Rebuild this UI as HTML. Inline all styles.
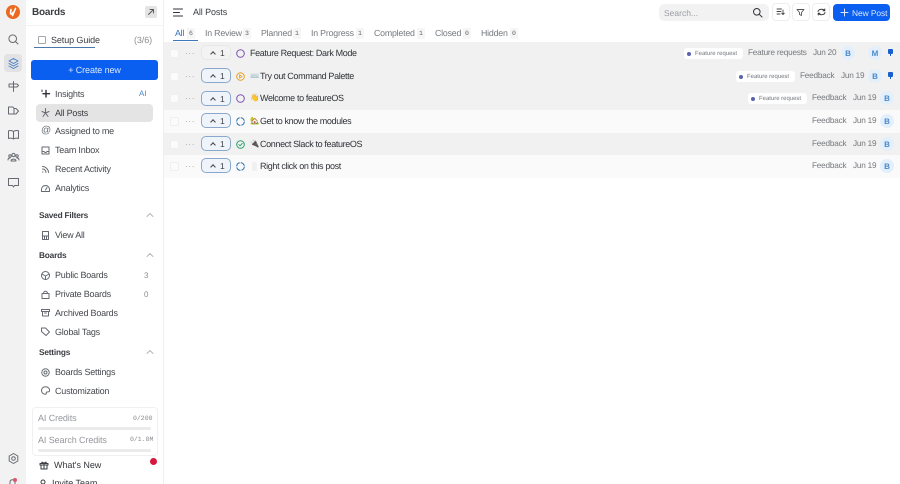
<!DOCTYPE html>
<html><head><meta charset="utf-8"><style>
html,body{margin:0;padding:0;width:900px;height:484px;overflow:hidden;background:#fff}
body{font-family:"Liberation Sans","Noto Sans CJK SC",sans-serif;position:relative;color:#3c3f45;text-rendering:geometricPrecision;-webkit-font-smoothing:antialiased}
.a{position:absolute;white-space:nowrap}
svg{position:absolute;fill:none;stroke:#666a70;stroke-width:1;stroke-linecap:round;stroke-linejoin:round}
.n{position:absolute;left:55px;font-size:9px;line-height:12px;letter-spacing:-.22px;color:#45484e;white-space:nowrap}
.h{position:absolute;left:39px;font-size:8.3px;line-height:12px;font-weight:bold;color:#3a3d42;letter-spacing:-.2px}
.tab{position:absolute;top:27px;font-size:8.8px;line-height:12px;letter-spacing:-.2px;color:#75797f;white-space:nowrap}
.cn{position:absolute;top:27.5px;font-family:"Liberation Mono",monospace;font-size:6.5px;line-height:11px;width:8px;text-align:center;background:#f6f6f6;color:#666}
.row{position:absolute;left:164px;width:736px;height:22px}
.chk{position:absolute;left:6px;top:7px;width:7px;height:7px;background:#fbfbfb;border:1px solid #efefef;border-radius:2px}
.dots{position:absolute;left:21px;top:4px;font-size:9px;line-height:14px;color:#a5a8ac;letter-spacing:.3px}
.vote{position:absolute;left:37px;top:3px;width:28px;height:13px;border:1px solid #8aa8cc;border-radius:5px;background:#eff4fa;color:#333}
.vote span{position:absolute;left:18px;top:.5px;font-size:8.5px;line-height:13px;color:#3a3d42}
.vote i{position:absolute;left:9px;top:5.5px;width:3px;height:3px;border-left:1px solid #444;border-top:1px solid #444;transform:rotate(45deg)}
.t{position:absolute;left:86px;top:5px;font-size:9px;line-height:12px;letter-spacing:-.36px;color:#2f3237;white-space:nowrap}
.e{position:absolute;top:5px;font-size:7.5px;line-height:12px;white-space:nowrap}
.tag{position:absolute;top:6px;height:11px;width:45px;background:#fff;border-radius:3px;font-size:6px;line-height:12px;color:#74777d;padding:0 3px 0 11px;letter-spacing:-.02px;white-space:nowrap}
.tag:before{content:"";position:absolute;left:3px;top:3.5px;width:4px;height:4px;border-radius:50%;background:#5a62ac}
.m{position:absolute;top:5px;font-size:8.2px;line-height:12px;color:#75787d;letter-spacing:-.2px;white-space:nowrap}
.av{position:absolute;top:4px;width:14px;height:14px;border-radius:50%;background:#e3effb;color:#4a88c9;font-size:8px;font-weight:bold;line-height:15px;text-align:center}
.pin{position:absolute;left:724px;top:7px;width:5px;height:5px;background:#1a5fd0;border-radius:1px}
.pin:after{content:"";position:absolute;left:2px;top:5px;width:1px;height:2px;background:#1a5fd0}
.btn{position:absolute;top:3px;width:16px;height:16px;border:1px solid #eeeeee;border-radius:4px;background:#fff}
</style></head><body>

<!-- icon rail -->
<div class="a" style="left:0;top:0;width:26px;height:484px;background:#f2f2f2"></div>
<div class="a" style="left:6px;top:5px;width:14px;height:14px;border-radius:50%;background:#ec6a1f"></div>
<svg style="left:6px;top:5px;stroke:#fff;stroke-width:1.6" width="14" height="14" viewBox="0 0 14 14"><path d="M5 4.5L4.5 8.5C5.5 9.5 6.5 9 7 7.5M9.5 3.5L6.5 10.5"/></svg>
<div class="a" style="left:4px;top:54px;width:18px;height:18px;border-radius:4px;background:#e2e2e4"></div>
<svg style="left:7px;top:33px" width="13" height="13" viewBox="0 0 13 13"><circle cx="5.7" cy="5.7" r="3.8"/><path d="M8.6 8.6L11 11"/></svg>
<svg style="left:7px;top:57px;stroke:#4c80c4" width="13" height="13" viewBox="0 0 13 13"><path d="M6.5 1.5L11 4 6.5 6.5 2 4z"/><path d="M2 6.5L6.5 9 11 6.5"/><path d="M2 9L6.5 11.5 11 9"/></svg>
<svg style="left:7px;top:80px" width="13" height="13" viewBox="0 0 13 13"><path d="M6.5 1.5V11.5M2 4H10L11.5 5.5 10 7H2z"/></svg>
<svg style="left:7px;top:104px" width="13" height="13" viewBox="0 0 13 13"><path d="M1.5 3H6L7 4.5V10H1.5zM7 4.5H9L11.5 7 9 10H7"/></svg>
<svg style="left:7px;top:128px" width="13" height="13" viewBox="0 0 13 13"><path d="M6.5 3.5C5 2.3 3 2.3 1.5 2.8V10.5C3 10 5 10 6.5 11 8 10 10 10 11.5 10.5V2.8C10 2.3 8 2.3 6.5 3.5zM6.5 3.5V11"/></svg>
<svg style="left:7px;top:151px" width="13" height="13" viewBox="0 0 13 13"><circle cx="6.5" cy="4" r="1.6"/><circle cx="3" cy="5" r="1.2"/><circle cx="10" cy="5" r="1.2"/><path d="M4 10C4 7.5 9 7.5 9 10zM1 9C1 7.5 2 7 3 7M12 9C12 7.5 11 7 10 7"/></svg>
<svg style="left:7px;top:176px" width="13" height="13" viewBox="0 0 13 13"><path d="M1.5 2.5H11.5V9.5H7.5L6.5 11 5.5 9.5H1.5z"/></svg>
<svg style="left:7px;top:452px" width="13" height="13" viewBox="0 0 13 13"><circle cx="6.5" cy="6.5" r="1.8"/><path d="M6.5 1.5L10.8 4V9L6.5 11.5 2.2 9V4z"/></svg>
<svg style="left:8px;top:477px" width="12" height="10" viewBox="0 0 12 10"><path d="M2 10V5C2 2 7 2 7 5V10"/></svg>
<div class="a" style="left:13px;top:478px;width:4px;height:4px;border-radius:50%;background:#e0556b"></div>

<!-- sidebar -->
<div class="a" style="left:32px;top:6px;font-size:10px;line-height:14px;font-weight:bold;color:#3a3d42;letter-spacing:-.2px">Boards</div>
<div class="a" style="left:145px;top:6px;width:12px;height:12px;border-radius:2px;background:#e4e4e5"></div>
<svg style="left:147px;top:8px;stroke:#555;stroke-width:.9" width="8" height="8" viewBox="0 0 8 8"><path d="M1.5 6.5L6.5 1.5M3 1.5H6.5V5"/></svg>
<div class="a" style="left:26px;top:25px;width:138px;height:1px;background:#f3f3f3"></div>
<div class="a" style="left:38px;top:36px;width:6px;height:6px;border:1px solid #a5a8ac;border-radius:1px"></div>
<div class="a" style="left:51px;top:34px;font-size:9px;line-height:12px;color:#3a3d42;letter-spacing:-.1px">Setup Guide</div>
<div class="a" style="left:34px;top:47px;width:61px;height:1px;background:#4a78ad"></div>
<div class="a" style="left:134px;top:34px;font-size:9px;line-height:12px;color:#8a8d92;letter-spacing:-.1px">(3/6)</div>

<div class="a" style="left:31px;top:60px;width:127px;height:20px;background:#0b5ff0;border-radius:3px;color:#dbe8ff;font-size:9px;line-height:20px;text-align:center;letter-spacing:-.1px">+ Create new</div>

<div class="a" style="left:36px;top:104px;width:117px;height:18px;background:#e4e4e4;border-radius:4px"></div>

<svg style="left:40px;top:88px;stroke:#2f3237" width="11" height="11" viewBox="0 0 11 11"><path d="M6 2.5V9M3 5.7H9.5" stroke-width="1.4"/><path d="M2 2V3.5"/></svg>
<div class="n" style="top:88px">Insights</div>
<div class="a" style="left:139px;top:88px;font-size:8px;line-height:12px;color:#4a88c9">AI</div>
<svg style="left:40px;top:107px" width="11" height="11" viewBox="0 0 11 11"><path d="M5.5 1.5V6M5.5 6L2 4.5M5.5 6L9 4.5M5.5 6L3 9.5M5.5 6L8 9.5"/></svg>
<div class="n" style="top:107px;color:#3a3d42">All Posts</div>
<div class="a" style="left:41px;top:125px;font-size:10px;line-height:12px;color:#666a70">@</div>
<div class="n" style="top:125px">Assigned to me</div>
<svg style="left:40px;top:145px" width="11" height="11" viewBox="0 0 11 11"><path d="M2 2H9V9H2zM2 6.5H4L5 7.5H6L7 6.5H9"/></svg>
<div class="n" style="top:144px">Team Inbox</div>
<svg style="left:40px;top:164px" width="11" height="11" viewBox="0 0 11 11"><path d="M2.5 2.5C5.5 2.5 8.5 5.5 8.5 8.5M2.5 5C4.5 5 6 6.5 6 8.5M2.5 8H3"/></svg>
<div class="n" style="top:163px">Recent Activity</div>
<svg style="left:40px;top:183px" width="11" height="11" viewBox="0 0 11 11"><path d="M1.5 8.5C1 4.5 3 2.5 5.5 2.5S10 4.5 9.5 8.5zM5.5 7L7 4.5"/></svg>
<div class="n" style="top:182px">Analytics</div>

<div class="h" style="top:209px">Saved Filters</div>
<svg style="left:146px;top:212px;stroke:#9a9da2;stroke-width:.8" width="8" height="6" viewBox="0 0 8 6"><path d="M1 4.5L4 1.5 7 4.5"/></svg>
<svg style="left:40px;top:230px" width="11" height="11" viewBox="0 0 11 11"><path d="M2.5 1.5H8.5V9.5H2.5zM2.5 6H8.5M4.5 6V9.5M6.5 6V9.5"/></svg>
<div class="n" style="top:229px">View All</div>

<div class="h" style="top:249px">Boards</div>
<svg style="left:146px;top:252px;stroke:#9a9da2;stroke-width:.8" width="8" height="6" viewBox="0 0 8 6"><path d="M1 4.5L4 1.5 7 4.5"/></svg>
<svg style="left:40px;top:270px" width="11" height="11" viewBox="0 0 11 11"><circle cx="5.5" cy="5.5" r="4"/><path d="M2 4L5.5 6 9 4M5.5 6V9.5"/></svg>
<div class="n" style="top:269px">Public Boards</div>
<div class="a" style="left:144px;top:270px;font-size:8px;line-height:12px;color:#8a8d92">3</div>
<svg style="left:40px;top:289px" width="11" height="11" viewBox="0 0 11 11"><path d="M2 4.5H9V9.5H2zM3.5 4.5C3.5 1.5 7.5 1.5 7.5 4.5"/></svg>
<div class="n" style="top:288px">Private Boards</div>
<div class="a" style="left:144px;top:289px;font-size:8px;line-height:12px;color:#8a8d92">0</div>
<svg style="left:40px;top:307px" width="11" height="11" viewBox="0 0 11 11"><path d="M1.5 2.5H9.5V4.5H1.5zM2.5 4.5V9H8.5V4.5M4.5 6H6.5"/></svg>
<div class="n" style="top:307px">Archived Boards</div>
<svg style="left:40px;top:326px" width="11" height="11" viewBox="0 0 11 11"><path d="M1.5 2H5.5L9.5 6 6 9.5 1.5 5.5z"/></svg>
<div class="n" style="top:326px">Global Tags</div>

<div class="h" style="top:346px">Settings</div>
<svg style="left:146px;top:349px;stroke:#9a9da2;stroke-width:.8" width="8" height="6" viewBox="0 0 8 6"><path d="M1 4.5L4 1.5 7 4.5"/></svg>
<svg style="left:40px;top:367px" width="11" height="11" viewBox="0 0 11 11"><circle cx="5.5" cy="5.5" r="1.5"/><circle cx="5.5" cy="5.5" r="3.7" stroke-dasharray="1.8 .8"/></svg>
<div class="n" style="top:366px">Boards Settings</div>
<svg style="left:40px;top:385px" width="11" height="11" viewBox="0 0 11 11"><path d="M5.5 1.8C8 1.8 9.6 3.5 9.6 5.2 9.6 7 8 7 7 7 6 7 6.3 8 6.3 8.5 6.3 9.2 5.5 9.3 5 9.2 3 8.9 1.5 7.5 1.5 5.5 1.5 3.5 3.3 1.8 5.5 1.8z"/></svg>
<div class="n" style="top:385px">Customization</div>

<div class="a" style="left:32px;top:407px;width:124px;height:47px;border:1px solid #f0f0f0;border-radius:4px;background:#fff"></div>
<div class="a" style="left:38px;top:412px;font-size:9px;line-height:12px;color:#95989d;letter-spacing:-.1px">AI Credits</div>
<div class="a" style="left:133px;top:413px;font-family:'Liberation Mono',monospace;font-size:6.5px;line-height:11px;color:#8a8d92">0/200</div>
<div class="a" style="left:38px;top:427px;width:113px;height:3px;background:#ebebeb;border-radius:2px"></div>
<div class="a" style="left:38px;top:434px;font-size:9px;line-height:12px;color:#95989d;letter-spacing:-.1px">AI Search Credits</div>
<div class="a" style="left:130px;top:434px;font-family:'Liberation Mono',monospace;font-size:6.5px;line-height:11px;color:#8a8d92">0/1.0M</div>
<div class="a" style="left:38px;top:449px;width:113px;height:3px;background:#ebebeb;border-radius:2px"></div>

<svg style="left:39px;top:460px;stroke:#3a3d42" width="10" height="10" viewBox="0 0 10 10"><path d="M1 3.5H9V5H1zM2 5V9H8V5zM5 3.5V9M5 3.5C3 1 2 2.5 3.5 3.5M5 3.5C7 1 8 2.5 6.5 3.5"/></svg>
<div class="a" style="left:54px;top:459px;font-size:9px;line-height:12px;color:#35383d;letter-spacing:-.05px">What's New</div>
<div class="a" style="left:150px;top:458px;width:7px;height:7px;border-radius:50%;background:#d8173c"></div>
<svg style="left:39px;top:479px;stroke:#3a3d42" width="10" height="8" viewBox="0 0 10 8"><circle cx="4" cy="3" r="2"/></svg>
<div class="a" style="left:52px;top:477px;font-size:9px;line-height:12px;color:#35383d;letter-spacing:-.05px">Invite Team</div>

<!-- header -->
<div class="a" style="left:163px;top:0;width:1px;height:484px;background:#f0f0f0"></div>
<svg style="left:173px;top:8px;stroke:#33363b;stroke-width:1.1" width="10" height="9" viewBox="0 0 10 9"><path d="M.5 1H9.5M.5 4.5H6.5M.5 8H9.5"/></svg>
<div class="a" style="left:193px;top:6px;font-size:9px;line-height:12px;color:#3a3d42;letter-spacing:-.1px">All Posts</div>

<div class="a" style="left:659px;top:4px;width:110px;height:17px;background:#f2f2f2;border-radius:5px"></div>
<div class="a" style="left:664px;top:6.5px;font-size:8.5px;line-height:12px;color:#9a9da2">Search...</div>
<svg style="left:752px;top:7px;stroke:#2f3237" width="11" height="11" viewBox="0 0 11 11"><circle cx="4.8" cy="4.8" r="3.3"/><path d="M7.3 7.3L10 10"/></svg>
<div class="btn" style="left:772px"></div>
<svg style="left:776px;top:8px;stroke:#444;stroke-width:.9" width="9" height="8" viewBox="0 0 9 8"><path d="M1 1H5.5M1 3.5H5M1 6H4M7 2V6.5M5.7 5.2L7 6.5 8.3 5.2"/></svg>
<div class="btn" style="left:792px"></div>
<svg style="left:796px;top:7.5px;stroke:#555;stroke-width:.9" width="9" height="9" viewBox="0 0 9 9"><path d="M1 1.5H8L5.5 4.5V7.5L3.5 6.5V4.5z"/></svg>
<div class="btn" style="left:812px"></div>
<svg style="left:817px;top:8px;stroke:#333;stroke-width:.9" width="9" height="8" viewBox="0 0 9 8"><path d="M1 3.5C1.5 1 6 .5 7.5 2.5M8 4.5C7.5 7 3 7.5 1.5 5.5M7.8 1V2.8H6M1.2 7V5.2H3"/></svg>
<div class="a" style="left:833px;top:4px;width:57px;height:17px;background:#0b5ff0;border-radius:4px"></div>
<svg style="left:840px;top:8px;stroke:#dbe8ff;stroke-width:1" width="9" height="9" viewBox="0 0 9 9"><path d="M4.5 1V8M1 4.5H8"/></svg>
<div class="a" style="left:852px;top:6.5px;font-size:8.4px;line-height:12px;color:#dbe8ff;letter-spacing:-.05px">New Post</div>

<!-- tabs -->
<div class="tab" style="left:175px;color:#2f6db5">All</div><div class="cn" style="left:187px">6</div>
<div class="a" style="left:173px;top:40px;width:25px;height:1px;background:#3c78bd"></div>
<div class="tab" style="left:205px">In Review</div><div class="cn" style="left:243px">3</div>
<div class="tab" style="left:261px">Planned</div><div class="cn" style="left:293px">1</div>
<div class="tab" style="left:311px">In Progress</div><div class="cn" style="left:356px">1</div>
<div class="tab" style="left:374px">Completed</div><div class="cn" style="left:417px">1</div>
<div class="tab" style="left:435px">Closed</div><div class="cn" style="left:463px">0</div>
<div class="tab" style="left:481px">Hidden</div><div class="cn" style="left:510px">0</div>

<!-- rows -->
<div class="row" style="top:42px;height:23px;background:#f1f1f1">
 <div class="chk"></div><div class="dots">···</div>
 <div class="vote" style="border-color:#e8e8e8;background:#f3f3f3"><i></i><span>1</span></div>
 <svg style="left:72px;top:7px;stroke:#7d4fb3" width="9" height="9" viewBox="0 0 9 9"><circle cx="4.5" cy="4.5" r="3.8"/></svg>
 <div class="t">Feature Request: Dark Mode</div>
 <div class="tag" style="left:520px">Feature request</div>
 <div class="m" style="left:584px">Feature requests</div>
 <div class="m" style="left:649px">Jun 20</div>
 <div class="av" style="left:677px">B</div>
 <div class="av" style="left:704px">M</div>
 <div class="pin"></div>
</div>
<div class="row" style="top:65px;height:22px;background:#f1f1f1">
 <div class="chk"></div><div class="dots">···</div>
 <div class="vote"><i></i><span>1</span></div>
 <svg style="left:72px;top:7px;stroke:#e8a020" width="9" height="9" viewBox="0 0 9 9"><circle cx="4.5" cy="4.5" r="3.8"/><path d="M3.5 2.8L6 4.5 3.5 6.2z" stroke-width=".8"/></svg>
 <div class="e" style="left:86px;color:#999">⌨️</div>
 <div class="t" style="left:96px">Try out Command Palette</div>
 <div class="tag" style="left:572px">Feature request</div>
 <div class="m" style="left:636px">Feedback</div>
 <div class="m" style="left:677px">Jun 19</div>
 <div class="av" style="left:704px">B</div>
 <div class="pin"></div>
</div>
<div class="row" style="top:87px;height:23px;background:#f1f1f1">
 <div class="chk"></div><div class="dots">···</div>
 <div class="vote" style="top:4px"><i></i><span>1</span></div>
 <svg style="left:72px;top:7px;stroke:#7d4fb3" width="9" height="9" viewBox="0 0 9 9"><circle cx="4.5" cy="4.5" r="3.8"/></svg>
 <div class="e" style="left:86px">👋</div>
 <div class="t" style="left:96px">Welcome to featureOS</div>
 <div class="tag" style="left:584px">Feature request</div>
 <div class="m" style="left:648px">Feedback</div>
 <div class="m" style="left:689px">Jun 19</div>
 <div class="av" style="left:716px">B</div>
</div>
<div class="row" style="top:110px;height:23px;background:#fafafa">
 <div class="chk"></div><div class="dots">···</div>
 <div class="vote"><i></i><span>1</span></div>
 <svg style="left:72px;top:7px;stroke:#2e6fb0" width="9" height="9" viewBox="0 0 9 9"><circle cx="4.5" cy="4.5" r="3.8" stroke-dasharray="5 1" stroke-linecap="butt"/></svg>
 <div class="e" style="left:86px">🏡</div>
 <div class="t" style="left:96px">Get to know the modules</div>
 <div class="m" style="left:648px">Feedback</div>
 <div class="m" style="left:689px">Jun 19</div>
 <div class="av" style="left:716px">B</div>
</div>
<div class="row" style="top:133px;height:22px;background:#f1f1f1">
 <div class="chk"></div><div class="dots">···</div>
 <div class="vote"><i></i><span>1</span></div>
 <svg style="left:72px;top:7px;stroke:#2a9d6a" width="9" height="9" viewBox="0 0 9 9"><circle cx="4.5" cy="4.5" r="3.8"/><path d="M2.8 4.6L4.1 5.8 6.3 3.3" stroke-width=".9"/></svg>
 <div class="e" style="left:86px">🔌</div>
 <div class="t" style="left:96px">Connect Slack to featureOS</div>
 <div class="m" style="left:648px">Feedback</div>
 <div class="m" style="left:689px">Jun 19</div>
 <div class="av" style="left:716px">B</div>
</div>
<div class="row" style="top:155px;height:23px;background:#fafafa">
 <div class="chk"></div><div class="dots">···</div>
 <div class="vote"><i></i><span>1</span></div>
 <svg style="left:72px;top:7px;stroke:#2e6fb0" width="9" height="9" viewBox="0 0 9 9"><circle cx="4.5" cy="4.5" r="3.8" stroke-dasharray="5 1" stroke-linecap="butt"/></svg>
 <div class="a" style="left:88px;top:7px;width:5px;height:9px;background:#f0f0f0;border-radius:2px"></div>
 <div class="t" style="left:96px">Right click on this post</div>
 <div class="m" style="left:648px">Feedback</div>
 <div class="m" style="left:689px">Jun 19</div>
 <div class="av" style="left:716px">B</div>
</div>
</body></html>
